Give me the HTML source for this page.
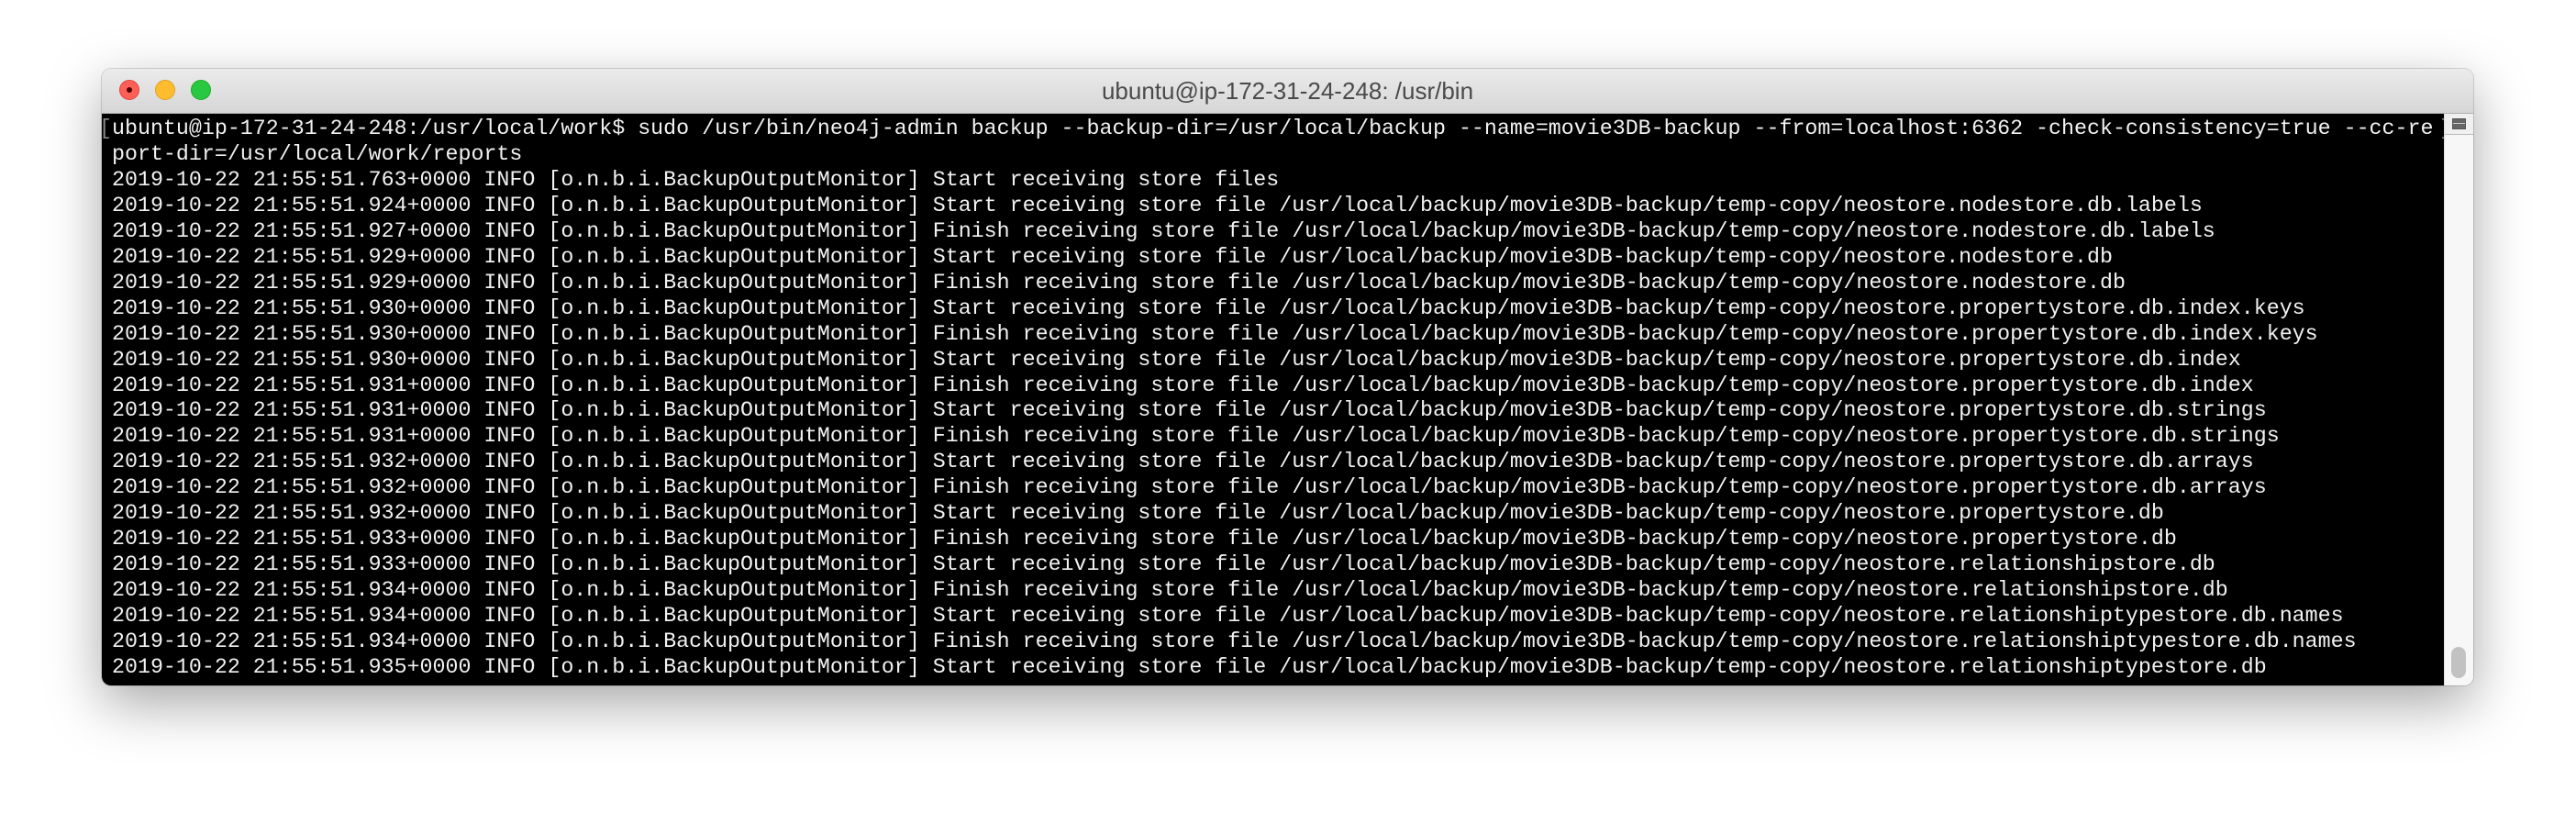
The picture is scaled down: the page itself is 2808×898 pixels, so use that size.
<!DOCTYPE html>
<html><head><meta charset="utf-8"><style>
html,body{margin:0;padding:0;background:#fff;width:2808px;height:898px;overflow:hidden}
.win{position:absolute;left:111px;top:75px;width:2585px;height:672px;border-radius:10px;overflow:hidden;box-shadow:0 20px 60px rgba(0,0,0,0.35),0 0 0 1px rgba(0,0,0,0.15)}
.title{position:absolute;left:0;top:0;width:100%;height:48px;background:linear-gradient(#ebebeb,#d6d6d6);border-bottom:1px solid #b0b0b0;text-align:center;font:26px "Liberation Sans",sans-serif;color:#4a4a4a;line-height:48px}
.dot{position:absolute;top:12px;width:22px;height:22px;border-radius:50%}
.term{position:absolute;left:0;top:49px;width:2554px;bottom:0;background:#000;overflow:hidden}
.sb{position:absolute;right:0;top:49px;width:31px;bottom:0;background:#f7f7f7;border-left:1px solid #ddd}
pre{margin:0;position:absolute;left:11px;top:3px;font:23.3px/27.95px "Liberation Mono",monospace;color:#f2f2f2;white-space:pre}
.br{position:absolute;top:3px;font:23.3px/27.95px "Liberation Mono",monospace;color:#888}
</style></head><body>
<div class="win">
<div class="title">ubuntu@ip-172-31-24-248: /usr/bin
<div class="dot" style="left:19px;background:#fe5f57;border:1px solid #e0443e;box-sizing:border-box"><div style="position:absolute;left:7px;top:7px;width:6px;height:6px;border-radius:50%;background:#4d0000"></div></div>
<div class="dot" style="left:58px;background:#febc2e;border:1px solid #dea123;box-sizing:border-box"></div>
<div class="dot" style="left:97px;background:#28c840;border:1px solid #1aab29;box-sizing:border-box"></div>
</div>
<div class="term"><span class="br" style="left:-3px">[</span><span class="br" style="left:2548px">]</span><pre>ubuntu@ip-172-31-24-248:/usr/local/work$ sudo /usr/bin/neo4j-admin backup --backup-dir=/usr/local/backup --name=movie3DB-backup --from=localhost:6362 -check-consistency=true --cc-re
port-dir=/usr/local/work/reports
2019-10-22 21:55:51.763+0000 INFO [o.n.b.i.BackupOutputMonitor] Start receiving store files
2019-10-22 21:55:51.924+0000 INFO [o.n.b.i.BackupOutputMonitor] Start receiving store file /usr/local/backup/movie3DB-backup/temp-copy/neostore.nodestore.db.labels
2019-10-22 21:55:51.927+0000 INFO [o.n.b.i.BackupOutputMonitor] Finish receiving store file /usr/local/backup/movie3DB-backup/temp-copy/neostore.nodestore.db.labels
2019-10-22 21:55:51.929+0000 INFO [o.n.b.i.BackupOutputMonitor] Start receiving store file /usr/local/backup/movie3DB-backup/temp-copy/neostore.nodestore.db
2019-10-22 21:55:51.929+0000 INFO [o.n.b.i.BackupOutputMonitor] Finish receiving store file /usr/local/backup/movie3DB-backup/temp-copy/neostore.nodestore.db
2019-10-22 21:55:51.930+0000 INFO [o.n.b.i.BackupOutputMonitor] Start receiving store file /usr/local/backup/movie3DB-backup/temp-copy/neostore.propertystore.db.index.keys
2019-10-22 21:55:51.930+0000 INFO [o.n.b.i.BackupOutputMonitor] Finish receiving store file /usr/local/backup/movie3DB-backup/temp-copy/neostore.propertystore.db.index.keys
2019-10-22 21:55:51.930+0000 INFO [o.n.b.i.BackupOutputMonitor] Start receiving store file /usr/local/backup/movie3DB-backup/temp-copy/neostore.propertystore.db.index
2019-10-22 21:55:51.931+0000 INFO [o.n.b.i.BackupOutputMonitor] Finish receiving store file /usr/local/backup/movie3DB-backup/temp-copy/neostore.propertystore.db.index
2019-10-22 21:55:51.931+0000 INFO [o.n.b.i.BackupOutputMonitor] Start receiving store file /usr/local/backup/movie3DB-backup/temp-copy/neostore.propertystore.db.strings
2019-10-22 21:55:51.931+0000 INFO [o.n.b.i.BackupOutputMonitor] Finish receiving store file /usr/local/backup/movie3DB-backup/temp-copy/neostore.propertystore.db.strings
2019-10-22 21:55:51.932+0000 INFO [o.n.b.i.BackupOutputMonitor] Start receiving store file /usr/local/backup/movie3DB-backup/temp-copy/neostore.propertystore.db.arrays
2019-10-22 21:55:51.932+0000 INFO [o.n.b.i.BackupOutputMonitor] Finish receiving store file /usr/local/backup/movie3DB-backup/temp-copy/neostore.propertystore.db.arrays
2019-10-22 21:55:51.932+0000 INFO [o.n.b.i.BackupOutputMonitor] Start receiving store file /usr/local/backup/movie3DB-backup/temp-copy/neostore.propertystore.db
2019-10-22 21:55:51.933+0000 INFO [o.n.b.i.BackupOutputMonitor] Finish receiving store file /usr/local/backup/movie3DB-backup/temp-copy/neostore.propertystore.db
2019-10-22 21:55:51.933+0000 INFO [o.n.b.i.BackupOutputMonitor] Start receiving store file /usr/local/backup/movie3DB-backup/temp-copy/neostore.relationshipstore.db
2019-10-22 21:55:51.934+0000 INFO [o.n.b.i.BackupOutputMonitor] Finish receiving store file /usr/local/backup/movie3DB-backup/temp-copy/neostore.relationshipstore.db
2019-10-22 21:55:51.934+0000 INFO [o.n.b.i.BackupOutputMonitor] Start receiving store file /usr/local/backup/movie3DB-backup/temp-copy/neostore.relationshiptypestore.db.names
2019-10-22 21:55:51.934+0000 INFO [o.n.b.i.BackupOutputMonitor] Finish receiving store file /usr/local/backup/movie3DB-backup/temp-copy/neostore.relationshiptypestore.db.names
2019-10-22 21:55:51.935+0000 INFO [o.n.b.i.BackupOutputMonitor] Start receiving store file /usr/local/backup/movie3DB-backup/temp-copy/neostore.relationshiptypestore.db</pre></div>
<div class="sb">
<div style="position:absolute;left:0;top:0;width:31px;height:22px;border-bottom:1px solid #bbb;background:#f0f0f0"></div>
<div style="position:absolute;left:8px;top:5px;width:15px;height:12px;background:#666;border:1px solid #555;box-sizing:border-box"><div style="position:absolute;left:0;top:4px;width:13px;height:1px;background:#ccc"></div></div>
<div style="position:absolute;left:7px;bottom:8px;width:16px;height:34px;border-radius:8px;background:#c2c2c2"></div>
</div>
</div>
</body></html>
